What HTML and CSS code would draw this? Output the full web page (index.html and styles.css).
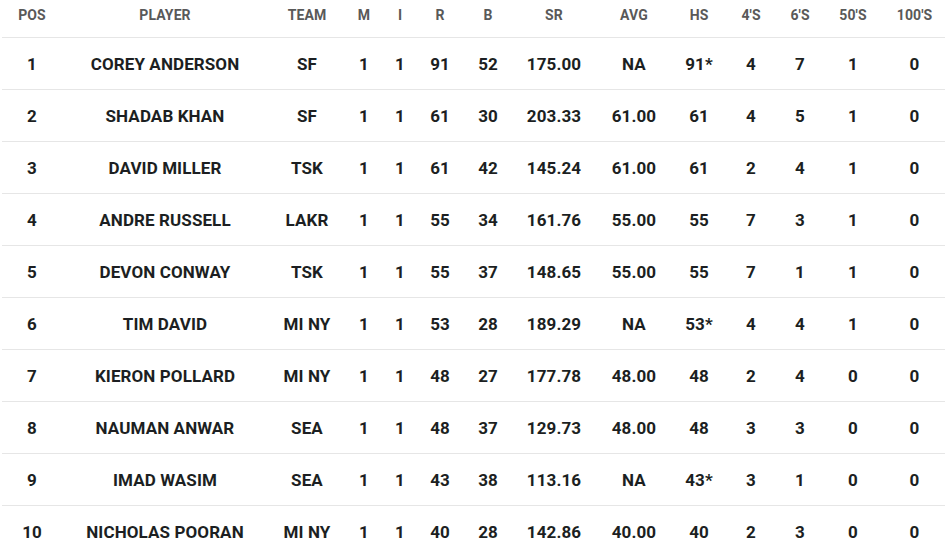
FILE: index.html
```html
<!DOCTYPE html>
<html>
<head>
<meta charset="utf-8">
<link rel="stylesheet" href="styles.css">
</head>
<body>
<div class="board">
  <div class="row head">
    <div>POS</div><div>PLAYER</div><div>TEAM</div><div>M</div><div>I</div><div>R</div><div>B</div><div>SR</div><div>AVG</div><div>HS</div><div>4'S</div><div>6'S</div><div>50'S</div><div>100'S</div>
  </div>
  <div class="row"><div>1</div><div>COREY ANDERSON</div><div>SF</div><div>1</div><div>1</div><div>91</div><div>52</div><div>175.00</div><div>NA</div><div>91*</div><div>4</div><div>7</div><div>1</div><div>0</div></div>
  <div class="row"><div>2</div><div>SHADAB KHAN</div><div>SF</div><div>1</div><div>1</div><div>61</div><div>30</div><div>203.33</div><div>61.00</div><div>61</div><div>4</div><div>5</div><div>1</div><div>0</div></div>
  <div class="row"><div>3</div><div>DAVID MILLER</div><div>TSK</div><div>1</div><div>1</div><div>61</div><div>42</div><div>145.24</div><div>61.00</div><div>61</div><div>2</div><div>4</div><div>1</div><div>0</div></div>
  <div class="row"><div>4</div><div>ANDRE RUSSELL</div><div>LAKR</div><div>1</div><div>1</div><div>55</div><div>34</div><div>161.76</div><div>55.00</div><div>55</div><div>7</div><div>3</div><div>1</div><div>0</div></div>
  <div class="row"><div>5</div><div>DEVON CONWAY</div><div>TSK</div><div>1</div><div>1</div><div>55</div><div>37</div><div>148.65</div><div>55.00</div><div>55</div><div>7</div><div>1</div><div>1</div><div>0</div></div>
  <div class="row"><div>6</div><div>TIM DAVID</div><div>MI NY</div><div>1</div><div>1</div><div>53</div><div>28</div><div>189.29</div><div>NA</div><div>53*</div><div>4</div><div>4</div><div>1</div><div>0</div></div>
  <div class="row"><div>7</div><div>KIERON POLLARD</div><div>MI NY</div><div>1</div><div>1</div><div>48</div><div>27</div><div>177.78</div><div>48.00</div><div>48</div><div>2</div><div>4</div><div>0</div><div>0</div></div>
  <div class="row"><div>8</div><div>NAUMAN ANWAR</div><div>SEA</div><div>1</div><div>1</div><div>48</div><div>37</div><div>129.73</div><div>48.00</div><div>48</div><div>3</div><div>3</div><div>0</div><div>0</div></div>
  <div class="row"><div>9</div><div>IMAD WASIM</div><div>SEA</div><div>1</div><div>1</div><div>43</div><div>38</div><div>113.16</div><div>NA</div><div>43*</div><div>3</div><div>1</div><div>0</div><div>0</div></div>
  <div class="row last"><div>10</div><div>NICHOLAS POORAN</div><div>MI NY</div><div>1</div><div>1</div><div>40</div><div>28</div><div>142.86</div><div>40.00</div><div>40</div><div>2</div><div>3</div><div>0</div><div>0</div></div>
</div>
</body>
</html>
```
FILE: styles.css
```css
html, body {
  margin: 0;
  padding: 0;
  background: #ffffff;
}
body {
  font-family: Roboto, "Liberation Sans", sans-serif;
  overflow: hidden;
}
.board {
  width: 943px;
  margin-left: 2px;
}
.row {
  display: grid;
  grid-template-columns: 60px 206px 78px 36px 36px 44px 52px 80px 80px 50px 54px 44px 62px 61px;
  height: 51px;
  align-items: center;
  text-align: center;
  border-bottom: 1px solid #e6e6e6;
  font-size: 17px;
  font-weight: 700;
  color: #1c1f22;
  letter-spacing: 0.1px;
}
.row.head {
  height: 29px;
  padding-bottom: 8px;
  font-size: 14px;
  color: #595959;
}
.row.last {
  border-bottom: none;
}
```
